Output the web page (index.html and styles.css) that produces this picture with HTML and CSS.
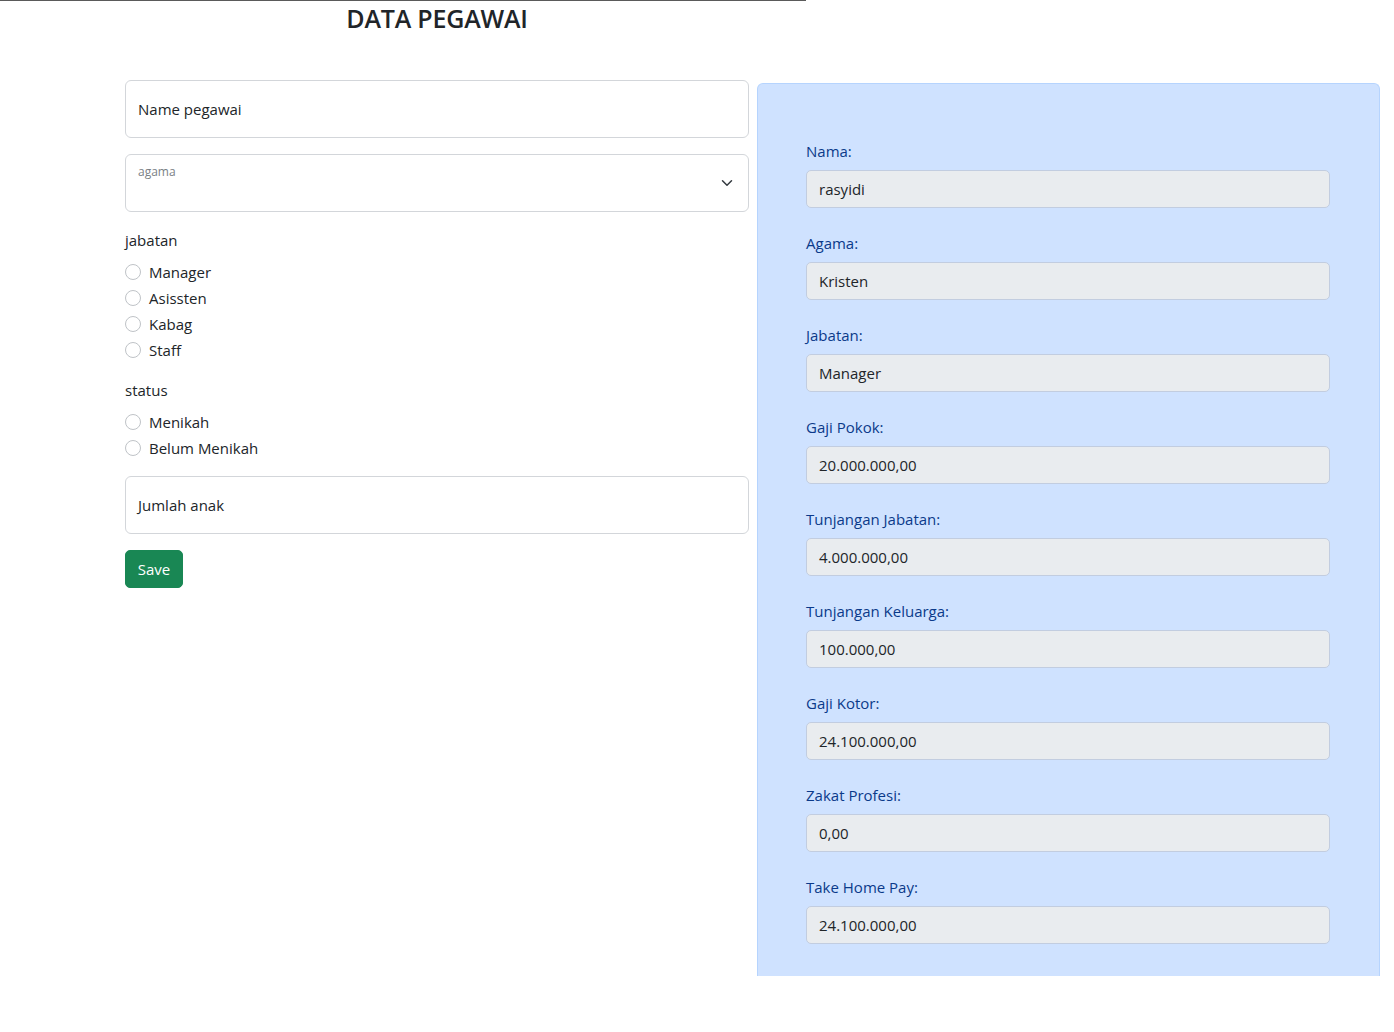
FILE: index.html
```html
<!DOCTYPE html>
<html lang="id">
<head>
<meta charset="utf-8">
<title>Data Pegawai</title>
<link rel="stylesheet" href="styles.css">
</head>
<body>
<div class="topline"></div>
<div class="page">
  <div class="left">
    <h1 class="title">DATA PEGAWAI</h1>
    <div class="field-box">
      <span class="placeholder">Name pegawai</span>
    </div>
    <div class="field-box select-box">
      <span class="floating">agama</span>
      <svg class="chev" width="12" height="12" viewBox="0 0 16 16"><path d="M2 5l6 6 6-6" fill="none" stroke="#343a40" stroke-width="2" stroke-linecap="round" stroke-linejoin="round"/></svg>
    </div>
    <div class="group-label">jabatan</div>
    <div class="radios">
      <label class="radio"><span class="circle"></span>Manager</label>
      <label class="radio"><span class="circle"></span>Asissten</label>
      <label class="radio"><span class="circle"></span>Kabag</label>
      <label class="radio"><span class="circle"></span>Staff</label>
    </div>
    <div class="group-label">status</div>
    <div class="radios">
      <label class="radio"><span class="circle"></span>Menikah</label>
      <label class="radio"><span class="circle"></span>Belum Menikah</label>
    </div>
    <div class="field-box">
      <span class="placeholder">Jumlah anak</span>
    </div>
    <button class="btn-save">Save</button>
  </div>
  <div class="panel">
    <div class="out"><div class="out-label">Nama:</div><div class="out-value">rasyidi</div></div>
    <div class="out"><div class="out-label">Agama:</div><div class="out-value">Kristen</div></div>
    <div class="out"><div class="out-label">Jabatan:</div><div class="out-value">Manager</div></div>
    <div class="out"><div class="out-label">Gaji Pokok:</div><div class="out-value">20.000.000,00</div></div>
    <div class="out"><div class="out-label">Tunjangan Jabatan:</div><div class="out-value">4.000.000,00</div></div>
    <div class="out"><div class="out-label">Tunjangan Keluarga:</div><div class="out-value">100.000,00</div></div>
    <div class="out"><div class="out-label">Gaji Kotor:</div><div class="out-value">24.100.000,00</div></div>
    <div class="out"><div class="out-label">Zakat Profesi:</div><div class="out-value">0,00</div></div>
    <div class="out"><div class="out-label">Take Home Pay:</div><div class="out-value">24.100.000,00</div></div>
  </div>
</div>
</body>
</html>
```

FILE: styles.css
```css
* { box-sizing: border-box; }
html, body { margin: 0; padding: 0; background: #fff; }
body {
  font-family: "Open Sans", "Noto Sans", "Liberation Sans", sans-serif;
  font-size: 16px;
  line-height: 1.5;
  color: #212529;
}
.topline {
  width: 806px;
  height: 1px;
  background: #5a5a5a;
}
.page {
  display: grid;
  grid-template-columns: 624px 623px;
  column-gap: 8px;
  padding-left: 125px;
}
.left { display: flex; flex-direction: column; }
.title {
  margin: 0 0 48px;
  height: 31px;
  line-height: 34px;
  font-size: 25px;
  font-weight: 600;
  text-align: center;
  color: #212529;
  letter-spacing: -0.2px;
}
.field-box {
  position: relative;
  height: 58px;
  border: 1px solid #d3d6da;
  border-radius: 6px;
  display: flex;
  align-items: center;
  padding: 0 12px;
  margin-bottom: 16px;
  background: #fff;
}
.placeholder { font-size: 15px; color: #212529; }
.select-box { align-items: flex-start; }
.floating {
  font-size: 12px;
  color: #7a7f85;
  margin-top: 8px;
}
.chev {
  position: absolute;
  right: 15px;
  top: 22px;
  width: 12px;
  height: 12px;
}
.group-label {
  font-size: 15px;
  margin-top: 0;
  margin-bottom: 7px;
  line-height: 24px;
}
.radios { display: flex; flex-direction: column; margin-bottom: 15px; }
.radio {
  display: flex;
  align-items: center;
  height: 26px;
  font-size: 15px;
}
.circle {
  width: 16px;
  height: 16px;
  border: 1px solid #bfc3c7;
  border-radius: 50%;
  margin-right: 8px;
  flex: none;
}
.btn-save {
  align-self: flex-start;
  margin-top: 0;
  width: 58px;
  height: 38px;
  background: #198754;
  color: #fff;
  border: 1px solid #198754;
  border-radius: 5px;
  font-family: inherit;
  font-size: 15px;
  padding: 0;
}
.panel {
  margin-top: 82px;
  height: 893px;
  background: #cfe2ff;
  border: 1px solid #b6d4fe;
  border-bottom: 0;
  border-radius: 6px 6px 0 0;
  padding: 55px 49px 0 48px;
}
.out { margin-bottom: 23px; }
.out-label {
  color: #0b3a8a;
  font-size: 15px;
  line-height: 24px;
  margin-bottom: 7px;
}
.out-value {
  height: 38px;
  background: #e9ecef;
  border: 1px solid #c2cde0;
  border-radius: 5px;
  padding: 0 12px;
  display: flex;
  align-items: center;
  font-size: 15px;
  color: #212529;
}
```
